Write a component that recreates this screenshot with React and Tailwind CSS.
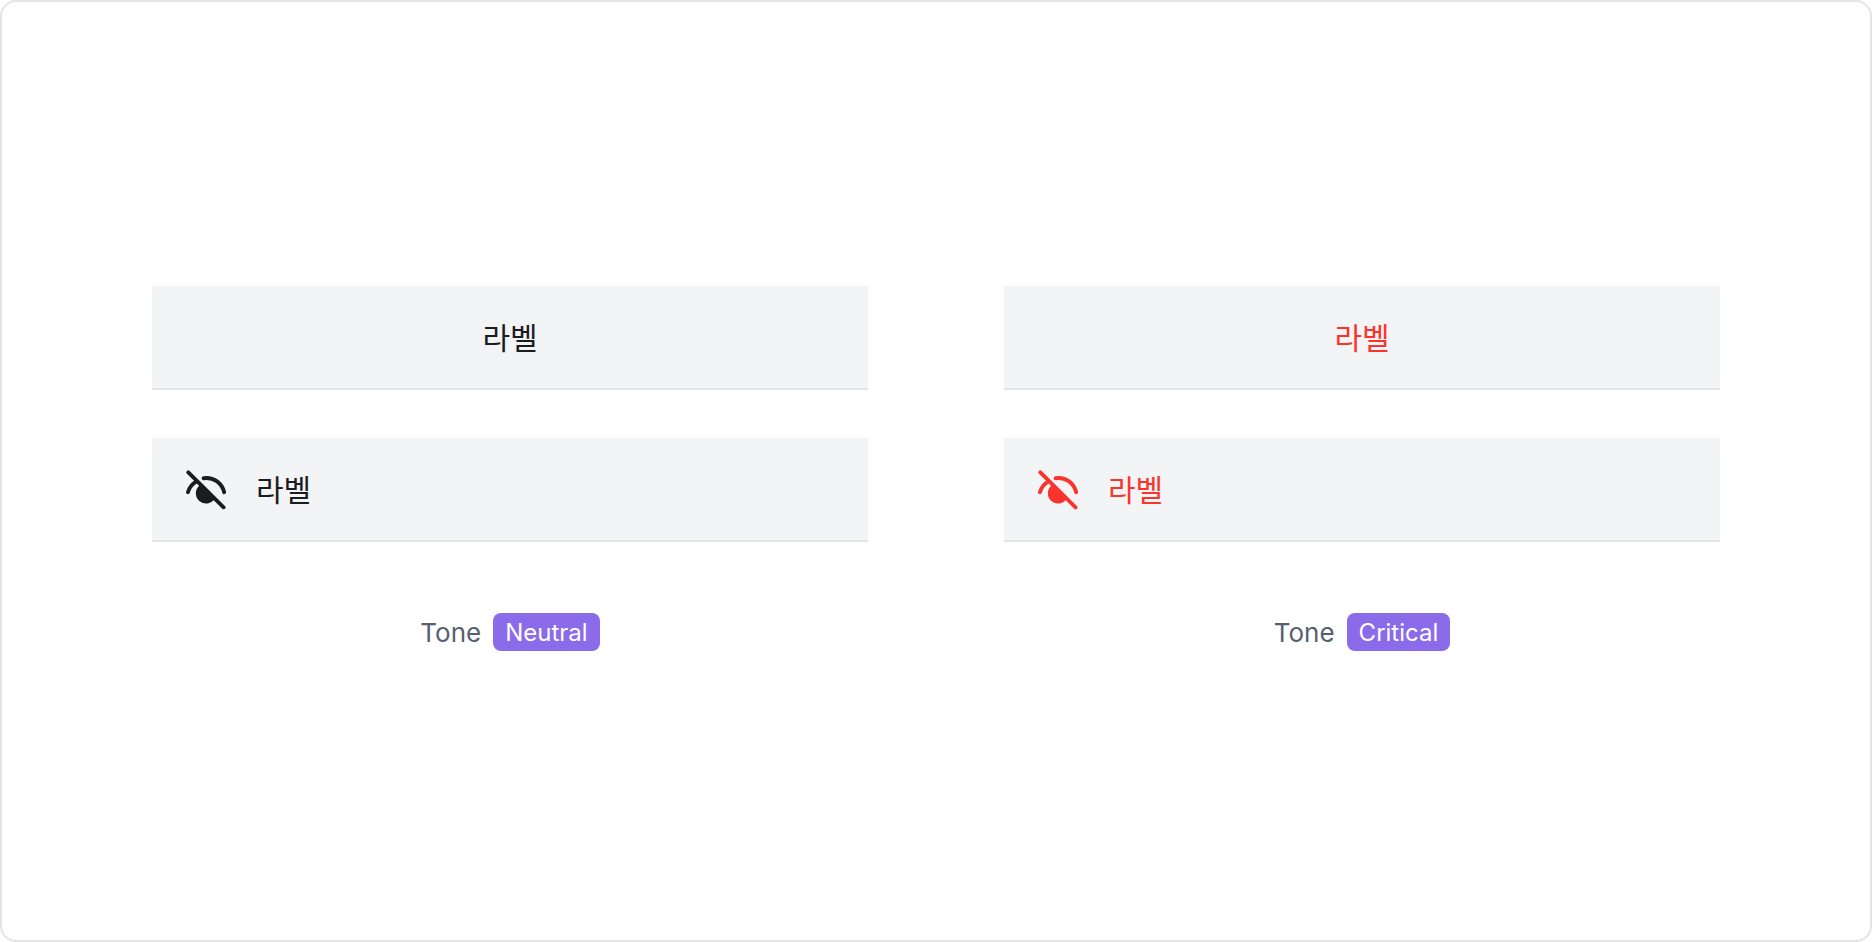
function EyeSlashIcon() {
  return (
    <svg className="size-11 shrink-0" viewBox="0 0 44 44" fill="none" aria-hidden="true">
      <g stroke="currentColor" strokeWidth="3.9" strokeLinecap="round">
        <path d="M4.3 4.3L39.6 39.3" />
        <path d="M19.6 10.2C29.5 8.7 37.8 14.8 40.2 24.2" />
        <path d="M3.9 24.2C5.2 19.8 8 16.2 11.8 13.8" />
      </g>
      <path d="M30.8 30.8A10.3 10.3 0 1 1 14.9 17.9L16.2 16.2Z" fill="currentColor" />
    </svg>
  )
}

const tones = [
  { name: 'Neutral', color: 'text-[#1a1c20]' },
  { name: 'Critical', color: 'text-[#fa342c]' },
]

function Item({ color, icon }) {
  return (
    <button
      type="button"
      className={`flex h-26 w-full items-center gap-7 border-b-2 border-[#e3e4e6] bg-[#f3f4f6] px-8 pt-0.5 text-[30px] leading-10 ${color} ${icon ? 'justify-start' : 'justify-center'}`}
    >
      {icon && <EyeSlashIcon />}
      <span>라벨</span>
    </button>
  )
}

function App() {
  return (
    <main className="min-h-screen rounded-[16px] border-2 border-[#e4e4e4] bg-white px-[150px] pt-71 font-['Inter','Noto_Sans_CJK_KR',sans-serif]">
      <div className="grid grid-cols-2 gap-34">
        {tones.map((tone) => (
          <section key={tone.name} className="flex flex-col items-center">
            <div className="flex w-full flex-col gap-12">
              <Item color={tone.color} />
              <Item color={tone.color} icon />
            </div>
            <div className="mt-[71px] flex items-center gap-3">
              <span className="pt-0.5 text-[26px] leading-9 text-[#57606f]">Tone</span>
              <span className="rounded-lg bg-[#8b6be9] px-3 pt-0.5 text-[24px] leading-9 text-white">{tone.name}</span>
            </div>
          </section>
        ))}
      </div>
    </main>
  )
}

export default App
